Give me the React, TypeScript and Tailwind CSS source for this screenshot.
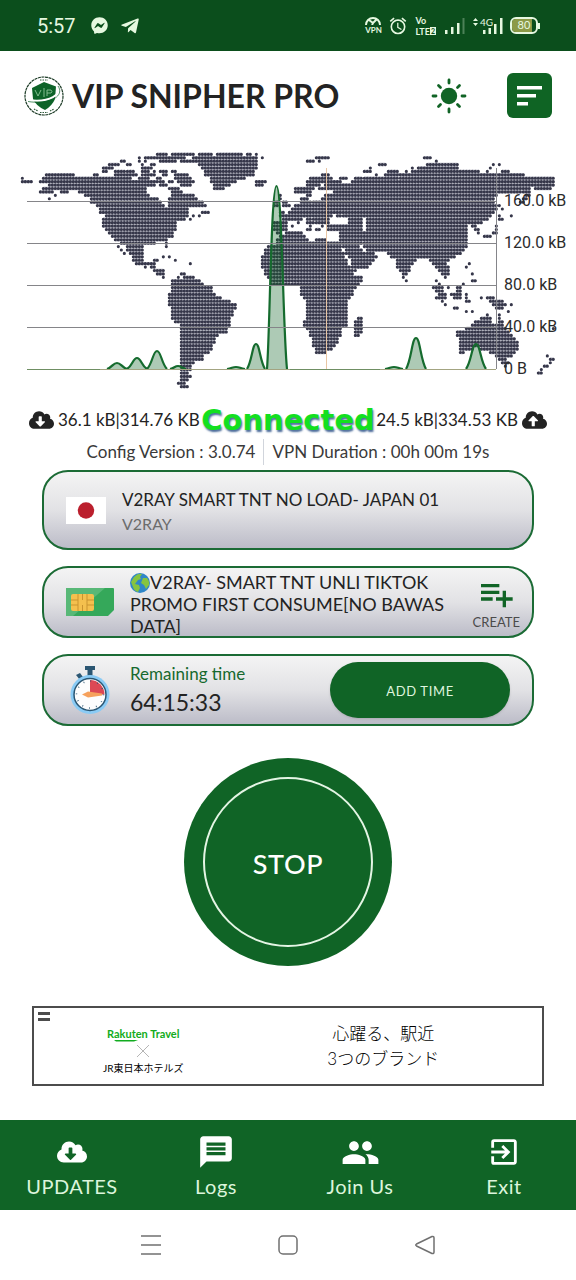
import type { ReactNode } from "react";
import {
  FaCloudDownloadAlt,
  FaCloudUploadAlt,
  FaFacebookMessenger,
  FaTelegramPlane,
} from "react-icons/fa";
import {
  MdExitToApp,
  MdMessage,
  MdOutlineAlarm,
  MdPeople,
  MdPlaylistAdd,
} from "react-icons/md";

// Horizontal runs of dots, one entry per map row: [start, end, start, end, ...]
const MAP_ROWS: number[][] = [
  [440, 466, 484, 550, 568, 603, 618, 696, 710, 722, 736, 736],
  [387, 387, 404, 520, 548, 738, 755, 755, 923, 953, 1246, 1264],
  [330, 344, 387, 387, 404, 404, 450, 498, 510, 738, 896, 914, 932, 932, 1282, 1282],
  [296, 324, 350, 360, 395, 395, 422, 432, 565, 738, 1111, 1130, 1254, 1338, 1452, 1452, 1469, 1469],
  [278, 306, 395, 424, 577, 738, 1084, 1084, 1210, 1210, 1228, 1338, 1443, 1443],
  [278, 292, 315, 340, 350, 370, 396, 416, 430, 430, 455, 470, 485, 497, 586, 734, 1066, 1078, 1138, 1158, 1193, 1193, 1210, 1408, 1428, 1428, 1478, 1496],
  [107, 192, 250, 262, 313, 378, 395, 395, 408, 430, 460, 470, 500, 535, 590, 728, 940, 958, 1102, 1102, 1128, 1543],
  [37, 37, 98, 365, 385, 415, 440, 455, 496, 540, 600, 705, 904, 968, 993, 1013, 1040, 1053, 1066, 1158, 1173, 1633],
  [37, 65, 90, 440, 450, 460, 476, 488, 505, 550, 600, 680, 735, 765, 893, 993, 1023, 1633],
  [115, 435, 450, 468, 510, 540, 609, 655, 735, 753, 893, 926, 946, 1633],
  [98, 410, 475, 505, 617, 637, 860, 913, 926, 1558, 1576, 1618],
  [90, 130, 155, 175, 205, 410, 485, 515, 860, 903, 973, 1528, 1540, 1558],
  [135, 135, 222, 415, 490, 550, 815, 815, 888, 904, 948, 1463, 1548, 1558],
  [118, 118, 240, 440, 480, 557, 815, 815, 878, 893, 940, 1448, 1538, 1553],
  [240, 452, 480, 577, 790, 800, 824, 830, 870, 898, 913, 1448, 1534, 1543],
  [258, 462, 477, 585, 790, 800, 820, 835, 860, 1458, 1468, 1468],
  [267, 530, 850, 1458, 1478, 1478],
  [275, 530, 575, 595, 815, 824, 838, 1448],
  [285, 530, 548, 548, 565, 565, 815, 968, 984, 990, 1003, 1443, 1468, 1468, 1505, 1505],
  [278, 520, 538, 538, 824, 878, 888, 903, 913, 958, 1018, 1053, 1068, 1428, 1468, 1478],
  [278, 500, 795, 833, 868, 868, 893, 913, 923, 953, 1018, 1053, 1074, 1418],
  [278, 495, 795, 826, 848, 848, 903, 903, 938, 938, 958, 1053, 1074, 1373, 1388, 1398, 1460, 1460],
  [287, 495, 795, 826, 893, 903, 923, 930, 958, 1053, 1068, 1373, 1398, 1408, 1460, 1460],
  [295, 485, 800, 810, 828, 878, 993, 1373, 1408, 1408, 1450, 1460],
  [305, 485, 815, 883, 993, 1373, 1423, 1443],
  [315, 470, 805, 893, 923, 943, 993, 1373],
  [330, 435, 467, 467, 800, 1053, 1063, 1373],
  [323, 323, 350, 395, 467, 467, 775, 988, 1003, 1048, 1063, 1368],
  [332, 332, 352, 395, 767, 993, 1008, 1058, 1068, 1356],
  [341, 341, 360, 395, 767, 998, 1008, 1063, 1076, 1086, 1138, 1353],
  [368, 395, 458, 458, 476, 476, 760, 1003, 1018, 1096, 1146, 1333],
  [368, 395, 430, 440, 494, 494, 760, 1008, 1023, 1093, 1163, 1213, 1258, 1313],
  [378, 430, 538, 538, 760, 1013, 1026, 1083, 1163, 1203, 1268, 1308, 1378, 1378],
  [404, 404, 420, 430, 760, 1018, 1028, 1068, 1163, 1196, 1278, 1318, 1373, 1373],
  [430, 458, 763, 1023, 1036, 1040, 1173, 1196, 1288, 1318],
  [445, 460, 510, 520, 768, 1028, 1178, 1186, 1298, 1318, 1388, 1388],
  [458, 458, 503, 503, 520, 548, 775, 1058, 1183, 1183, 1308, 1308],
  [485, 565, 783, 1050, 1191, 1191, 1282, 1282, 1388, 1398],
  [490, 575, 787, 838, 848, 1043, 1290, 1290, 1363, 1363],
  [490, 603, 873, 1038, 1273, 1293, 1318, 1318, 1343, 1353],
  [485, 603, 876, 1028, 1280, 1288, 1298, 1298, 1338, 1353],
  [475, 612, 876, 1023, 1288, 1306, 1326, 1353, 1373, 1373],
  [475, 630, 883, 1018, 1283, 1303, 1333, 1353, 1373, 1373, 1416, 1416, 1433, 1448],
  [475, 657, 893, 1013, 1298, 1298, 1373, 1380, 1443, 1478],
  [475, 675, 893, 1010, 1308, 1308, 1453, 1488, 1505, 1505],
  [485, 675, 893, 1008, 1335, 1344, 1460, 1478],
  [485, 668, 893, 1008, 1373, 1373, 1390, 1390, 1496, 1496],
  [490, 665, 893, 1013, 1433, 1433, 1469, 1469],
  [490, 657, 893, 1013, 1048, 1058, 1416, 1440, 1469, 1469],
  [500, 657, 886, 1013, 1040, 1053, 1398, 1443, 1469, 1478],
  [517, 657, 886, 1006, 1040, 1050, 1388, 1448, 1463, 1478],
  [517, 650, 896, 993, 1040, 1050, 1373, 1483, 1633, 1633],
  [517, 648, 903, 988, 1033, 1050, 1343, 1498],
  [517, 620, 903, 988, 1033, 1043, 1343, 1508],
  [517, 610, 906, 983, 1353, 1513],
  [517, 610, 906, 978, 1353, 1518],
  [517, 605, 913, 976, 1353, 1518],
  [517, 600, 918, 963, 1353, 1388, 1418, 1518],
  [517, 595, 923, 943, 1353, 1363, 1438, 1513],
  [510, 575, 1458, 1508, 1613, 1613],
  [510, 575, 1468, 1488, 1623, 1631],
  [510, 550, 1478, 1496, 1623, 1623],
  [512, 540, 1488, 1488, 1603, 1613],
  [512, 540, 1594, 1594],
  [512, 530, 1585, 1594],
  [512, 540],
  [512, 530],
  [503, 522],
  [512, 530],
];

const snap = (x: number) => Math.round((x - 37) / 9) * 9 + 37;

const mapPath = MAP_ROWS.map((row, index) => {
  const y = 43 + index * 10.25;
  let d = "";
  for (let i = 0; i < row.length; i += 2) {
    d += `M${snap(row[i])} ${y}H${snap(row[i + 1]) + 0.1}`;
  }
  return d;
}).join("");

// Traffic peaks: centre, half width and top, in chart coordinates
const PEAKS = [
  [117, 10, 363],
  [137, 10, 358],
  [157, 10, 351],
  [178, 8, 366],
  [236, 9, 367],
  [256, 9, 344],
  [394, 9, 367],
  [416, 10, 338],
  [476, 10, 344],
];

const GRID = [
  { y: 201, label: "160.0 kB" },
  { y: 243, label: "120.0 kB" },
  { y: 285, label: "80.0 kB" },
  { y: 327, label: "40.0 kB" },
  { y: 369, label: "0 B" },
];

const peakPath = (x: number, w: number, top: number) =>
  `M${x - w} 369C${x - w * 0.45} ${369 - (369 - top) * 0.3} ${x - w * 0.4} ${top} ${x} ${top}S${x + w * 0.45} ${369 - (369 - top) * 0.3} ${x + w} 369`;

function TrafficChart() {
  return (
    <svg
      viewBox="0 146 576 246"
      className="block w-full"
      role="img"
      aria-label="Traffic"
    >
      <g transform="translate(10 140) scale(0.33333)">
        <path
          d={mapPath}
          fill="none"
          stroke="#9c9dac"
          strokeWidth="10.250"
          opacity="0.75"
        />
        <path
          d={mapPath}
          fill="none"
          stroke="#36374a"
          strokeWidth="9.400"
          strokeLinecap="round"
          strokeDasharray="0 9"
        />
      </g>
      <g fill="#106526" stroke="#156b2e" strokeWidth="2.200">
        {PEAKS.map(([x, w, top]) => (
          <path key={x} d={peakPath(x, w, top)} fillOpacity="0.34" />
        ))}
        <path
          d="M267 369C270 330 271 186 276.500 186S283 330 287 369"
          fillOpacity="0.34"
        />
      </g>
      {GRID.map(({ y, label }) => (
        <g key={label}>
          <path
            d={`M27 ${y}.5H496`}
            stroke={y === 369 ? "#a3a481" : "#858589"}
            strokeWidth="1"
          />
          <text
            x="504"
            y={y + 5}
            fill="#2b2b2b"
            className="font-[Roboto,sans-serif] text-base"
          >
            {label}
          </text>
        </g>
      ))}
      <path d="M27 369.500H100M290 369.500H380" stroke="#6f8f63" />
      <path d="M496.500 168V369" stroke="#85858a" />
      <path d="M326.500 168V369" stroke="#e9c6a4" />
    </svg>
  );
}

function StatusBar() {
  return (
    <div className="flex h-[51px] items-center justify-between bg-[#0b4e1c] pr-9 pl-[37px] text-[#e6f8e0]">
      <div className="flex items-center gap-3">
        <span className="w-[42px] font-[Roboto,sans-serif] text-xl">5:57</span>
        <FaFacebookMessenger className="h-[17px] w-[17px]" />
        <FaTelegramPlane className="h-5 w-5" />
      </div>
      <div className="flex items-center gap-[7px]">
        <span className="flex w-4 flex-col items-center">
          <svg viewBox="0 0 16 8" className="h-2 w-4" fill="none" stroke="currentColor" strokeWidth="2">
            <path d="M1 8A7 7 0 0 1 15 8M4 3L8 6L12 2M8 6L7 8" />
          </svg>
          <span className="text-[8px] leading-[10px] font-bold">VPN</span>
        </span>
        <MdOutlineAlarm className="h-5 w-5" />
        <span className="flex flex-col text-[9px] leading-[11px] font-bold">
          <span>Vo</span>
          <span className="flex items-center">
            LTE
            <span className="bg-[#e6f8e0] px-px text-[7px] leading-[8px] text-[#0b4e1c]">
              2
            </span>
          </span>
        </span>
        <svg viewBox="0 0 22 18" className="h-[18px] w-[22px]" fill="currentColor">
          <path d="M2 13h2.500v4H2zM8 10h2.500v7H8zM14 6h2.500v11H14z" />
          <path d="M19.500 1h2v16h-2z" opacity="0.3" />
        </svg>
        <span className="relative flex h-[18px] w-[31px] justify-end">
          <span className="absolute top-0 left-2 text-[10px] leading-[10px]">4G</span>
          <svg viewBox="0 0 31 18" className="h-[18px] w-[31px]" fill="currentColor">
            <path d="M1 4l2.500-3L6 4zM1 6l2.500 3L6 6zM11 13h2.500v4H11zM16.500 11H19v6h-2.500zM22 7h2.500v10H22zM28 1h2.500v16H28z" />
          </svg>
        </span>
        <span className="flex items-center">
          <span className="flex h-[17px] w-[28px] items-center rounded-md border-2 border-current">
            <span className="flex h-full w-5 items-center justify-center rounded-l-sm bg-[#8c9a47] pl-1 text-[11px]">
              80
            </span>
          </span>
          <span className="h-1.5 w-0.5 bg-current" />
        </span>
      </div>
    </div>
  );
}

function Logo() {
  return (
    <svg viewBox="0 0 40 40" className="h-10 w-10" aria-hidden="true">
      <circle cx="20" cy="20" r="19" fill="#fff" stroke="#1c3b26" strokeWidth="1.200" strokeDasharray="3 0.600" />
      <path d="M20 6L32 10.500L31 23Q28 30 21 34Q12 30 9 23L8 12z" fill="#0d6328" />
      <path d="M11 14l3 6 3-6M20 12v9M23 20v-6h4q2 2 0 3h-4" fill="none" stroke="#8fc79a" strokeWidth="0.900" />
      <path d="M33 10C39 18 26 27 4 24" fill="none" stroke="#fff" strokeWidth="2" />
      <path d="M34 10C41 20 26 29 4 25.500" fill="none" stroke="#0d6328" strokeWidth="0.700" />
      <path d="M16 4h8M10 33l4 2M26 35l4-2M16 36.500h8" stroke="#2e5a3a" strokeWidth="1.200" strokeDasharray="1.500 1" />
    </svg>
  );
}

function Header() {
  return (
    <header className="flex h-[95px] items-center justify-between px-6 pb-1.5">
      <div className="flex items-center gap-2">
        <Logo />
        <h1 className="font-[Lato,sans-serif] text-[32px] leading-10 font-bold text-[#232323]">
          VIP SNIPHER PRO
        </h1>
      </div>
      <div className="flex items-center gap-10">
        <button aria-label="Toggle theme">
          <svg viewBox="0 0 36 36" className="h-9 w-9" stroke="#116426" strokeWidth="2.800" strokeLinecap="round">
            <circle cx="18" cy="18" r="8.200" fill="#116426" stroke="none" />
            <path d="M18 2v3M18 31v3M2 18h3M31 18h3M7.500 7.500l2 2M26.500 26.500l2 2M28.500 7.500l-2 2M9.500 26.500l-2 2" />
          </svg>
        </button>
        <button aria-label="Menu" className="rounded-md bg-[#0f6424]">
          <svg viewBox="0 0 45 45" className="h-[45px] w-[45px]" fill="#fff">
            <path d="M10 13h25v3.500H10zM10 21h19v3.500H10zM10 29h11v3.500H10z" />
          </svg>
        </button>
      </div>
    </header>
  );
}

function Card({ className, children }: { className: string; children: ReactNode }) {
  return (
    <div
      className={`flex items-center rounded-[26px] border-2 border-[#1b6b35] bg-linear-to-b from-[#f4f4f4] via-[#e2e2e5] to-[#bcbcc8] ${className}`}
    >
      {children}
    </div>
  );
}

function SimIcon() {
  return (
    <svg viewBox="0 0 48 30" className="h-[30px] w-12 shrink-0" aria-hidden="true">
      <path d="M1 1h46q1 0 1 1v21l-6 6H1q-1 0-1-1V2q0-1 1-1z" fill="#35a85a" />
      <path d="M0 2q0-1 1-1h38L7 29H1q-1 0-1-1z" fill="#58b877" />
      <rect x="5" y="7" width="23" height="17" rx="2" fill="#f4c04e" />
      <path d="M5 13h7v-6M5 18h7v6M28 13h-7V7M28 18h-7v6M12 13v5M21 13v5M16.500 7v6M16.500 18v6" fill="none" stroke="#c99430" strokeWidth="1" />
    </svg>
  );
}

function StopwatchIcon() {
  return (
    <svg viewBox="0 0 40 50" className="h-[50px] w-10 shrink-0" aria-hidden="true">
      <path d="M15 1h10v4h-2.500v6h-5V5H15z" fill="#2b5672" />
      <path d="M6 10l4-2 3 4-3 3z" fill="#2b5672" />
      <circle cx="20" cy="29.500" r="19.500" fill="#8acbf5" />
      <circle cx="20" cy="29.500" r="16" fill="#fdfdfd" stroke="#2b5672" strokeWidth="1.500" />
      <path d="M20 29.500V15A14.500 14.500 0 0 1 34.500 29.500z" fill="#dc4855" />
      <circle cx="20" cy="29.500" r="13.500" fill="none" stroke="#2b5672" strokeWidth="1.500" strokeDasharray="0.800 6.270" />
      <path d="M12 29.500l6-3 14 2v2l-14 2z" fill="#f6a15c" />
    </svg>
  );
}

function GlobeIcon() {
  return (
    <svg viewBox="0 0 20 20" className="inline-block h-5 w-5 align-[-4px]" aria-hidden="true">
      <circle cx="10" cy="10" r="10" fill="#2f86c8" />
      <path d="M4 4q4-4 8-3l-2 3 1 2-3 1-3 4 4 1 1 3-2 4q-4-1-5-5L1 9zM13 5l4 0q3 4 2 7l-3 4-2-4-3-2z" fill="#86c440" />
    </svg>
  );
}

const NAV_ITEMS = [
  { label: "UPDATES", icon: FaCloudDownloadAlt, size: "h-[30px] w-[30px]" },
  { label: "Logs", icon: MdMessage, size: "h-[38px] w-[38px]" },
  { label: "Join Us", icon: MdPeople, size: "h-[39px] w-[39px]" },
  { label: "Exit", icon: MdExitToApp, size: "h-[34px] w-[34px]" },
];

export default function App() {
  return (
    <div className="flex min-h-screen flex-col bg-white font-[Lato,'Noto_Sans_CJK_JP',sans-serif] text-[#232323]">
      <StatusBar />
      <Header />
      <main className="flex flex-1 flex-col">
        <TrafficChart />

        <div className="relative mt-3.5 flex h-7 items-center justify-between px-[29px] text-[17px]">
          <span className="flex items-center gap-1">
            <FaCloudDownloadAlt className="h-6 w-[25px]" />
            36.1 kB|314.76 KB
          </span>
          <span className="flex items-center gap-1">
            24.5 kB|334.53 KB
            <FaCloudUploadAlt className="h-6 w-[25px]" />
          </span>
          <span className="absolute inset-x-0 text-center font-['DejaVu_Sans',sans-serif] text-[29px] leading-8 font-bold text-[#13e01f] [text-shadow:1px_2px_2px_#4b6b9a]">
            Connected
          </span>
        </div>

        <div className="mt-1.5 flex h-6 items-center justify-center text-[17px] text-[#3a3a3a]">
          <span className="border-r border-gray-300 pr-2">Config Version : 3.0.74</span>
          <span className="pl-2">VPN Duration : 00h 00m 19s</span>
        </div>

        <div className="mx-[42px] mt-1.5 flex flex-col gap-4">
          <Card className="h-20 gap-4 px-[22px]">
            <svg viewBox="0 0 40 27" className="h-[27px] w-10 shrink-0" aria-hidden="true">
              <path d="M0 0h40v27H0z" fill="#fff" />
              <circle cx="20" cy="13.500" r="8.200" fill="#bb1f2d" />
            </svg>
            <div className="pt-1">
              <p className="text-[17px] leading-6">V2RAY SMART TNT NO LOAD- JAPAN 01</p>
              <p className="text-base leading-6 text-[#6c6c6c]">V2RAY</p>
            </div>
          </Card>

          <Card className="h-[72px] px-[22px] pr-3">
            <SimIcon />
            <p className="ml-4 flex-1 pt-1 text-lg leading-[22px]">
              <GlobeIcon />
              V2RAY- SMART TNT UNLI TIKTOK PROMO FIRST CONSUME[NO BAWAS DATA]
            </p>
            <button className="flex flex-col items-center text-[13px] leading-4 text-[#4b4b4b]">
              <MdPlaylistAdd className="h-10 w-10 text-[#116426]" />
              CREATE
            </button>
          </Card>

          <Card className="h-[72px] pr-[22px] pl-[26px]">
            <StopwatchIcon />
            <div className="ml-5 flex-1">
              <p className="text-[17px] leading-6 text-[#17692e]">Remaining time</p>
              <p className="text-[23px] leading-8">64:15:33</p>
            </div>
            <button className="h-14 w-[180px] rounded-full bg-[#106426] pt-1 text-[13px] tracking-wider text-[#dff5df] shadow">
              ADD TIME
            </button>
          </Card>
        </div>

        <button className="mx-auto mt-8 flex h-52 w-52 items-center justify-center rounded-full bg-[#106426] text-white">
          <span className="flex h-[170px] w-[170px] items-center justify-center rounded-full border-2 border-[#e4f5e4] pt-1 text-[27px] font-medium tracking-wide">
            STOP
          </span>
        </button>

        <a
          href="#ad"
          className="relative mx-8 mt-10 flex h-20 items-center border-2 border-[#4c4c4c] bg-white text-black"
        >
          <span className="absolute top-1 left-1 flex flex-col gap-[3px]">
            <span className="h-[3px] w-3 bg-[#4c4c4c]" />
            <span className="h-[3px] w-3 bg-[#4c4c4c]" />
          </span>
          <span className="flex w-[43%] flex-col items-center pt-3">
            <span className="text-[11px] leading-3 font-bold text-[#12ac20]">Rakuten Travel</span>
            <svg viewBox="0 0 76 20" className="h-5 w-[76px]" fill="none" aria-hidden="true">
              <path d="M9 0h24l-4 1.500H11z" fill="#12ac20" />
              <path d="M32 5l12 12M44 5L32 17" stroke="#b5b5b5" />
            </svg>
            <span className="text-[10px] leading-4">JR東日本ホテルズ</span>
          </span>
          <span className="flex-1 pr-7 text-center text-[17px] leading-[25px] font-light">
            心躍る、駅近
            <br />
            3つのブランド
          </span>
        </a>
      </main>

      <nav className="grid h-[90px] grid-cols-4 bg-[#106426] text-[#dcf5dc]">
        {NAV_ITEMS.map(({ label, icon: Icon, size }) => (
          <a key={label} href="#" className="flex flex-col items-center pt-3 text-xl leading-6 tracking-wide">
            <span className="flex h-10 items-center">
              <Icon className={`${size} text-white`} />
            </span>
            <span className="pt-0.5">{label}</span>
          </a>
        ))}
      </nav>
      <div className="flex h-[70px] items-center justify-center gap-[117px] text-[#707070]">
        <button aria-label="Recent apps">
          <svg viewBox="0 0 20 20" className="h-5 w-5" stroke="currentColor" strokeWidth="1.500">
            <path d="M0 1h20M0 10h20M0 19h20" />
          </svg>
        </button>
        <button aria-label="Home">
          <svg viewBox="0 0 20 20" className="h-5 w-5" fill="none" stroke="currentColor" strokeWidth="1.500">
            <rect x="1" y="1" width="18" height="18" rx="4" />
          </svg>
        </button>
        <button aria-label="Back">
          <svg viewBox="0 0 20 20" className="h-5 w-5" fill="none" stroke="currentColor" strokeWidth="1.500" strokeLinejoin="round">
            <path d="M1.500 9L17 1.500Q19 1 19 3V17Q19 19 17 18.500L1.500 11Q0 10 1.500 9z" />
          </svg>
        </button>
      </div>
    </div>
  );
}
